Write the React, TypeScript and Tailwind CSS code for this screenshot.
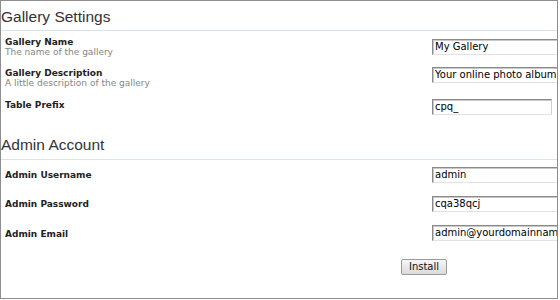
import React from "react";

const dv = "font-['DejaVu_Sans',Verdana,sans-serif]";

function Field({ value, w = "w-[200px]" }: { value: string; w?: string }) {
  return (
    <div
      role="textbox"
      aria-readonly="true"
      className={`${w} h-[16px] shrink-0 overflow-hidden whitespace-nowrap border border-t-[#8a8a8a] border-l-[#8a8a8a] border-r-[#d0d0d0] border-b-[#e2e2e2] bg-white pl-[2px] text-[10px] leading-[14px] text-black shadow-[inset_1px_1px_0_#c8c8c8] ${dv}`}
    >
      {value}
    </div>
  );
}

function Label({ title, desc, pt }: { title: string; desc?: string; pt: string }) {
  return (
    <div className={`w-[427px] shrink-0 ${pt} ${dv} text-[9px] leading-[10px]`}>
      <div className="font-bold text-[#222]">{title}</div>
      {desc && <div className="text-[#858585]">{desc}</div>}
    </div>
  );
}

export default function App() {
  return (
    <div className="w-[560px] h-[300px] bg-white">
      <div className="w-[558px] h-[299px] border border-[#8e8e8e] overflow-hidden bg-white flex flex-col">
        <div className="h-[30px] shrink-0 border-b border-[#d6e4ef] pt-[8px] pl-0 font-['Liberation_Sans',Arial,sans-serif] text-[15.5px] leading-[16px] text-[#333]">
          Gallery Settings
        </div>

        <div className="h-[30px] shrink-0 flex items-start pl-[4px]">
          <Label title="Gallery Name" desc="The name of the gallery" pt="pt-[6px]" />
          <div className="mt-[8px] flex">
            <Field value="My Gallery" />
          </div>
        </div>

        <div className="h-[31px] shrink-0 flex items-start pl-[4px]">
          <Label title="Gallery Description" desc="A little description of the gallery" pt="pt-[7px]" />
          <div className="mt-[6px] flex">
            <Field value="Your online photo album" />
          </div>
        </div>

        <div className="h-[31px] shrink-0 flex items-start pl-[4px]">
          <Label title="Table Prefix" pt="pt-[8px]" />
          <div className="mt-[7px] flex">
            <Field value="cpq_" w="w-[120px]" />
          </div>
        </div>

        <div className="h-[37px] shrink-0 border-b border-[#d6e4ef] pt-[14px] font-['Liberation_Sans',Arial,sans-serif] text-[15.5px] leading-[16px] text-[#333]">
          Admin Account
        </div>

        <div className="h-[29px] shrink-0 flex items-start pl-[4px]">
          <Label title="Admin Username" pt="pt-[10px]" />
          <div className="mt-[7px] flex">
            <Field value="admin" />
          </div>
        </div>

        <div className="h-[29px] shrink-0 flex items-start pl-[4px]">
          <Label title="Admin Password" pt="pt-[10px]" />
          <div className="mt-[7px] flex">
            <Field value="cqa38qcj" />
          </div>
        </div>

        <div className="h-[29px] shrink-0 flex items-start pl-[4px]">
          <Label title="Admin Email" pt="pt-[11px]" />
          <div className="mt-[7px] flex">
            <Field value="admin@yourdomainname.com" />
          </div>
        </div>

        <div className="flex pl-[400px] pt-[12px]">
          <button
            className={`w-[46px] h-[16px] rounded-[2px] border border-[#9a9a9a] bg-gradient-to-b from-[#f7f7f7] to-[#dadada] p-0 text-[10px] leading-[14px] text-[#111] ${dv}`}
          >
            Install
          </button>
        </div>
      </div>
    </div>
  );
}
